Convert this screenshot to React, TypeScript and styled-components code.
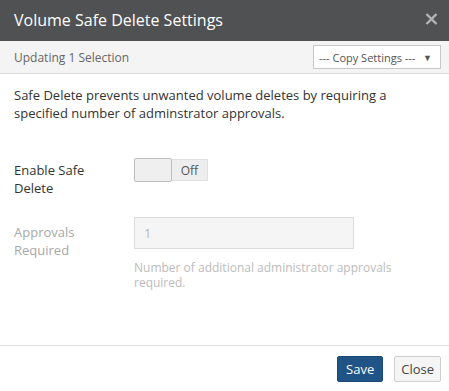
import styled, { createGlobalStyle } from "styled-components";

const GlobalStyle = createGlobalStyle`
  html, body {
    margin: 0;
    padding: 0;
    background: #fff;
    font-family: "Open Sans", "Liberation Sans", sans-serif;
  }
`;

const Dialog = styled.div`
  width: 449px;
  height: 391px;
  display: flex;
  flex-direction: column;
  background: #fff;
  color: #333;
`;

const Header = styled.div`
  height: 41px;
  flex-shrink: 0;
  background: #505153;
  display: flex;
  align-items: center;
  justify-content: space-between;
  padding: 0 8px 0 14px;
`;

const Title = styled.div`
  color: #fff;
  font-size: 16px;
  margin-top: -1px;
`;

const CloseX = styled.button`
  width: 20px;
  height: 20px;
  border: none;
  background: none;
  padding: 0;
  display: flex;
  align-items: center;
  justify-content: center;
  margin-top: -4px;
  cursor: pointer;
`;

const SubHeader = styled.div`
  height: 32px;
  flex-shrink: 0;
  background: #f4f4f4;
  border-bottom: 1px solid #dcdcdc;
  display: flex;
  align-items: center;
  justify-content: space-between;
  padding: 0 8px 0 14px;
`;

const SubTitle = styled.div`
  font-size: 12px;
  color: #666;
`;

const Select = styled.div`
  width: 128px;
  height: 24px;
  box-sizing: border-box;
  border: 1px solid #c8c8c8;
  background: #fff;
  display: flex;
  align-items: center;
  justify-content: space-between;
  padding: 0 8px 0 5px;
  font-size: 11px;
  color: #555;
`;

const Caret = styled.span`
  font-size: 9px;
  color: #555;
`;

const Body = styled.div`
  flex: 1;
  padding: 12px 14px 0 14px;
`;

const Intro = styled.p`
  margin: 0 0 36px;
  font-size: 13px;
  line-height: 18px;
  color: #333;
`;

const Row = styled.div<{ $gap?: number }>`
  display: flex;
  align-items: flex-start;
  margin-bottom: ${(p) => p.$gap ?? 0}px;
`;

const Label = styled.div<{ $disabled?: boolean; $top: number }>`
  width: 120px;
  flex-shrink: 0;
  font-size: 13px;
  line-height: 18px;
  padding-top: ${(p) => p.$top}px;
  color: ${(p) => (p.$disabled ? "#a8a8a8" : "#333")};
`;

const Field = styled.div`
  display: flex;
  flex-direction: column;
`;

const Toggle = styled.div`
  display: flex;
  align-items: flex-start;
`;

const Handle = styled.div`
  width: 38px;
  height: 24px;
  box-sizing: border-box;
  border: 1px solid #bdbdbd;
  border-radius: 2px;
  background: #efefef;
`;

const ToggleState = styled.div`
  width: 36px;
  height: 22px;
  margin-top: 1px;
  box-sizing: border-box;
  border: 1px solid #e0e0e0;
  border-left: none;
  background: #eeeeee;
  font-size: 12px;
  color: #555;
  display: flex;
  align-items: center;
  justify-content: center;
`;

const Input = styled.input`
  width: 220px;
  height: 32px;
  box-sizing: border-box;
  border: 1px solid #dcdcdc;
  background: #f5f5f5;
  padding: 0 9px;
  font-family: inherit;
  font-size: 13px;
  color: #bbb;
  outline: none;
`;

const Help = styled.div`
  margin-top: 11px;
  width: 270px;
  font-size: 12px;
  line-height: 15px;
  color: #bcbcbc;
`;

const Footer = styled.div`
  height: 45px;
  flex-shrink: 0;
  border-top: 1px solid #e0e0e0;
  display: flex;
  align-items: center;
  justify-content: flex-end;
  gap: 11px;
  padding: 0 8px 0 14px;
`;

const Button = styled.button<{ $primary?: boolean }>`
  height: 26px;
  box-sizing: border-box;
  padding: 0 ${(p) => (p.$primary ? 8 : 6)}px;
  border-radius: 2px;
  font-family: inherit;
  font-size: 13px;
  cursor: pointer;
  border: 1px solid ${(p) => (p.$primary ? "#1b4a78" : "#cfcfcf")};
  background: ${(p) => (p.$primary ? "#205487" : "#f5f5f5")};
  color: ${(p) => (p.$primary ? "#fff" : "#444")};
`;

const App = () => {
  return (
    <>
      <GlobalStyle />
      <Dialog>
        <Header>
          <Title>Volume Safe Delete Settings</Title>
          <CloseX>
            <svg width="13" height="12" viewBox="0 0 13 12">
              <path d="M1.5 1 L11.5 11 M11.5 1 L1.5 11" stroke="#b4b4b4" strokeWidth="2.4" />
            </svg>
          </CloseX>
        </Header>
        <SubHeader>
          <SubTitle>Updating 1 Selection</SubTitle>
          <Select>
            <span>--- Copy Settings ---</span>
            <Caret>▼</Caret>
          </Select>
        </SubHeader>
        <Body>
          <Intro>
            Safe Delete prevents unwanted volume deletes by requiring a specified number of
            adminstrator approvals.
          </Intro>
          <Row $gap={20}>
            <Label $top={3}>
              Enable Safe
              <br />
              Delete
            </Label>
            <Toggle>
              <Handle />
              <ToggleState>Off</ToggleState>
            </Toggle>
          </Row>
          <Row>
            <Label $disabled $top={6}>
              Approvals
              <br />
              Required
            </Label>
            <Field>
              <Input value="1" disabled readOnly />
              <Help>Number of additional administrator approvals required.</Help>
            </Field>
          </Row>
        </Body>
        <Footer>
          <Button $primary>Save</Button>
          <Button>Close</Button>
        </Footer>
      </Dialog>
    </>
  );
};

export default App;
